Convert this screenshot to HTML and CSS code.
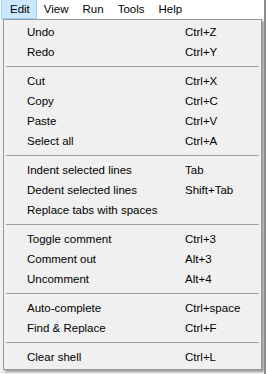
FILE: index.html
```html
<!DOCTYPE html>
<html lang="en">
    <head>
        <meta charset="UTF-8">
        <meta name="viewport" content="width=device-width, initial-scale=1.0">
        <title>Edit menu</title>
        <link rel="stylesheet" href="styles.css">
    </head>

    <body>

        <!-- Menu bar -->

        <div class="menubar">
            <span class="top-item active">Edit</span>
            <span class="top-item">View</span>
            <span class="top-item">Run</span>
            <span class="top-item">Tools</span>
            <span class="top-item">Help</span>
        </div>

        <!-- Edit dropdown -->

        <div class="menu">
            <div class="item"><span>Undo</span><span>Ctrl+Z</span></div>
            <div class="item"><span>Redo</span><span>Ctrl+Y</span></div>
            <div class="sep"></div>
            <div class="item"><span>Cut</span><span>Ctrl+X</span></div>
            <div class="item"><span>Copy</span><span>Ctrl+C</span></div>
            <div class="item"><span>Paste</span><span>Ctrl+V</span></div>
            <div class="item"><span>Select all</span><span>Ctrl+A</span></div>
            <div class="sep"></div>
            <div class="item"><span>Indent selected lines</span><span>Tab</span></div>
            <div class="item"><span>Dedent selected lines</span><span>Shift+Tab</span></div>
            <div class="item"><span>Replace tabs with spaces</span><span></span></div>
            <div class="sep"></div>
            <div class="item"><span>Toggle comment</span><span>Ctrl+3</span></div>
            <div class="item"><span>Comment out</span><span>Alt+3</span></div>
            <div class="item"><span>Uncomment</span><span>Alt+4</span></div>
            <div class="sep"></div>
            <div class="item"><span>Auto-complete</span><span>Ctrl+space</span></div>
            <div class="item"><span>Find &amp; Replace</span><span>Ctrl+F</span></div>
            <div class="sep"></div>
            <div class="item"><span>Clear shell</span><span>Ctrl+L</span></div>
        </div>

    </body>

</html>
```

FILE: styles.css
```css
body {
    margin: 0;
    height: 374px;
    font-family: "Liberation Sans", Arial, sans-serif;
    font-size: 11.5px;
    color: #000;
    background: #f0f0f0;
    border-right: 2px solid #8c8c8c;
    box-sizing: border-box;
    overflow: hidden;
}

/* Menu bar */

.menubar {
    display: flex;
    height: 19px;
    padding-left: 1px;
    background: #fff;
}

.top-item {
    display: flex;
    align-items: center;
    padding: 0 6px;
    border: 1px solid transparent;
    border-top: 0;
}

.top-item:first-child {
    padding-left: 8px;
}

.top-item.active {
    background: #cce8ff;
    border-color: #99d1ff;
}

/* Dropdown */

.menu {
    width: 259px;
    margin-left: 3px;
    padding: 2px 0;
    background: #f0f0f0;
    border: 1px solid #979797;
    box-sizing: border-box;
    box-shadow: 2px 2px 2px rgba(0, 0, 0, 0.35);
}

.item {
    display: grid;
    grid-template-columns: 158px auto;
    align-items: center;
    height: 20px;
    padding-left: 23px;
    white-space: nowrap;
}

.sep {
    height: 9px;
    margin: 0 2px;
    display: flex;
    align-items: center;
}

.sep::before {
    content: "";
    flex: 1;
    height: 1px;
    background: #a0a0a0;
}
```
